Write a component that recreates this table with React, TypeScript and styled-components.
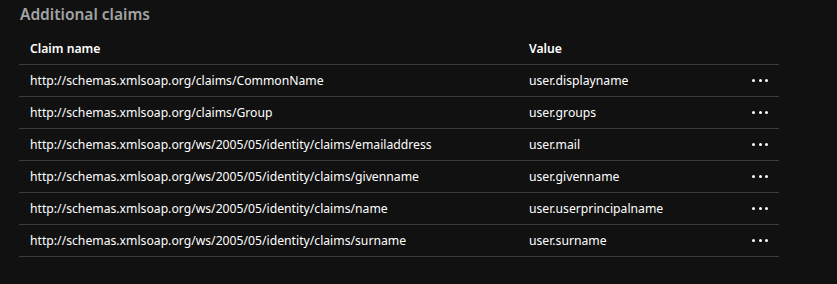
import React from 'react';
import styled, { createGlobalStyle } from 'styled-components';

const GlobalStyle = createGlobalStyle`
  html, body {
    margin: 0;
    padding: 0;
    background: #111111;
    font-family: "Noto Sans", "Open Sans", sans-serif;
  }
`;

const Section = styled.section`
  width: 837px;
  height: 284px;
  padding: 3px 0 0 19px;
  box-sizing: border-box;
  background: #111111;
`;

const Title = styled.h2`
  margin: 0 0 0 1px;
  font-size: 15.5px;
  font-weight: 600;
  line-height: 23px;
  color: #a3a3a3;
`;

const Table = styled.div`
  width: 760px;
  margin-top: 7px;
  display: flex;
  flex-direction: column;
`;

const Row = styled.div<{ $header?: boolean }>`
  display: grid;
  grid-template-columns: 499px 1fr 27px;
  align-items: center;
  height: 32px;
  border-bottom: 1px solid #3b3b3b;
  box-sizing: border-box;
  font-size: 12.2px;
  font-weight: ${(p) => (p.$header ? 600 : 400)};
  color: #ffffff;
`;

const Cell = styled.div`
  padding-left: 11px;
  white-space: nowrap;
`;

const More = styled.button`
  display: flex;
  gap: 3.5px;
  align-items: center;
  background: none;
  border: none;
  padding: 0;
  height: 20px;
  cursor: pointer;
`;

const Dot = styled.span`
  width: 3px;
  height: 3px;
  border-radius: 50%;
  background: #ffffff;
`;

const claims = [
  ['http://schemas.xmlsoap.org/claims/CommonName', 'user.displayname'],
  ['http://schemas.xmlsoap.org/claims/Group', 'user.groups'],
  ['http://schemas.xmlsoap.org/ws/2005/05/identity/claims/emailaddress', 'user.mail'],
  ['http://schemas.xmlsoap.org/ws/2005/05/identity/claims/givenname', 'user.givenname'],
  ['http://schemas.xmlsoap.org/ws/2005/05/identity/claims/name', 'user.userprincipalname'],
  ['http://schemas.xmlsoap.org/ws/2005/05/identity/claims/surname', 'user.surname'],
];

export default function App() {
  return (
    <>
      <GlobalStyle />
      <Section>
        <Title>Additional claims</Title>
        <Table>
          <Row $header>
            <Cell>Claim name</Cell>
            <Cell>Value</Cell>
            <span />
          </Row>
          {claims.map(([name, value]) => (
            <Row key={name}>
              <Cell>{name}</Cell>
              <Cell>{value}</Cell>
              <More aria-label="More actions">
                <Dot />
                <Dot />
                <Dot />
              </More>
            </Row>
          ))}
        </Table>
      </Section>
    </>
  );
}
